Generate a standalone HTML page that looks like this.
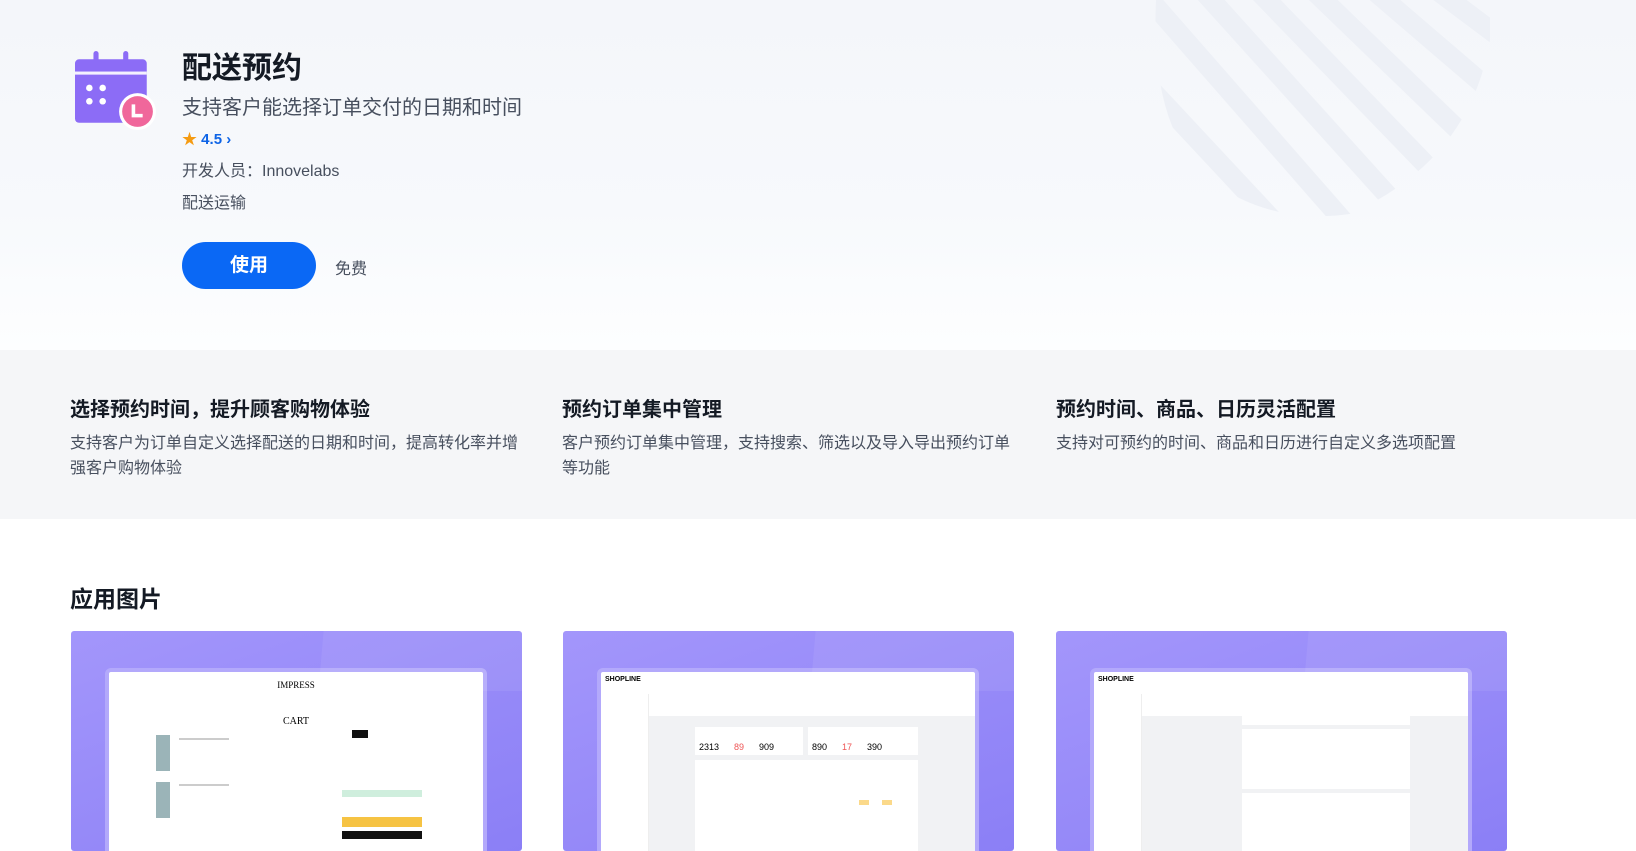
<!DOCTYPE html>
<html><head><meta charset="utf-8"><style>
*{margin:0;padding:0;box-sizing:border-box}
body{width:1636px;height:839px;overflow:hidden;background:#fff;font-family:"Liberation Sans","Noto Sans CJK SC",sans-serif;position:relative}
.hero{position:absolute;left:0;top:0;width:1636px;height:350px;background:linear-gradient(180deg,#f4f6fa 0%,#f7f9fc 60%,#fdfeff 100%)}
.abs{position:absolute}
.t1{left:182px;top:43px;font-size:30px;font-weight:bold;color:#141a24}
.t2{left:182px;top:91px;font-size:20px;color:#474f5e}
.rt{left:182px;top:128px;font-size:15px;color:#0e64e6;font-weight:bold}
.dv{left:182px;top:157px;font-size:16px;color:#474f5e}
.ct{left:182px;top:189px;font-size:16px;color:#474f5e}
.btn{left:182px;top:242px;width:134px;height:47px;border-radius:24px;background:#0a68f5;color:#fff;font-size:19px;font-weight:bold;text-align:center;line-height:47px}
.free{left:335px;top:255px;font-size:16px;color:#474f5e}
.band{left:0;top:350px;width:1636px;height:169px;background:#f5f6f8}
.ft{font-size:20px;font-weight:bold;color:#141a24;top:393px}
.fd{font-size:16px;color:#474f5e;top:431px;line-height:25px;width:460px}
.h2{left:70px;top:580px;font-size:23px;font-weight:bold;color:#141a24}
.card{top:631px;width:451px;height:220px;background:linear-gradient(160deg,#a396fb,#8b7ff6);border-radius:3px;overflow:hidden}
.card:after{content:"";position:absolute;left:250px;top:0;width:260px;height:60px;background:rgba(255,255,255,.07);transform:skewX(-5deg)}
.scr{position:absolute;left:34px;top:37px;width:382px;height:200px;background:#fff;border:4px solid #b3a9fb;border-radius:6px}
.side{position:absolute;left:0;top:22px;width:48px;height:180px;background:#fff;border-right:1px solid #eee}
.main{position:absolute;left:48px;top:22px;right:0;bottom:0;background:#f1f2f4}
.bx{position:absolute;background:#fff}
.ln{position:absolute;height:2px;background:#ccc}
</style></head><body>
<div class="hero"></div>
<svg class="abs" style="left:1150px;top:0" width="340" height="216" viewBox="0 0 340 216">
<defs><clipPath id="c"><path d="M6 0H340V40Q320 160 200 214Q120 225 60 180Q0 130 6 0Z"/></clipPath></defs>
<g clip-path="url(#c)" stroke="#edf0f6" stroke-width="20">
<line x1="-120" y1="-40" x2="160" y2="260"/><line x1="-70" y1="-80" x2="210" y2="240"/><line x1="-20" y1="-90" x2="260" y2="220"/><line x1="30" y1="-90" x2="310" y2="200"/><line x1="80" y1="-90" x2="360" y2="180"/><line x1="130" y1="-90" x2="410" y2="150"/><line x1="180" y1="-90" x2="460" y2="120"/><line x1="230" y1="-90" x2="510" y2="90"/>
</g></svg>
<svg class="abs" style="left:75px;top:49px" width="82" height="82" viewBox="0 0 80 80">
<rect x="0" y="10" width="70" height="62" rx="4" fill="#8c6cf6"/>
<rect x="0" y="22" width="70" height="3" fill="#fff" opacity=".9"/>
<rect x="18" y="2" width="5" height="14" rx="2.5" fill="#8c6cf6"/><rect x="47" y="2" width="5" height="14" rx="2.5" fill="#8c6cf6"/>
<circle cx="14" cy="38" r="3.2" fill="#fff"/><circle cx="27" cy="38" r="3.2" fill="#fff"/><circle cx="14" cy="51" r="3.2" fill="#fff"/><circle cx="27" cy="51" r="3.2" fill="#fff"/>
<circle cx="61" cy="61" r="18" fill="#fff"/><circle cx="61" cy="61" r="15" fill="#f0679b"/>
<path d="M57 54V65H66" stroke="#fff" stroke-width="3.5" fill="none"/>
</svg>
<div class="abs t1">配送预约</div>
<div class="abs t2">支持客户能选择订单交付的日期和时间</div>
<div class="abs rt"><span style="color:#f59b11">★</span> 4.5 ›</div>
<div class="abs dv">开发人员：Innovelabs</div>
<div class="abs ct">配送运输</div>
<div class="abs btn">使用</div>
<div class="abs free">免费</div>
<div class="abs band"></div>
<div class="abs ft" style="left:70px">选择预约时间，提升顾客购物体验</div>
<div class="abs fd" style="left:70px">支持客户为订单自定义选择配送的日期和时间，提高转化率并增强客户购物体验</div>
<div class="abs ft" style="left:562px">预约订单集中管理</div>
<div class="abs fd" style="left:562px">客户预约订单集中管理，支持搜索、筛选以及导入导出预约订单等功能</div>
<div class="abs ft" style="left:1056px">预约时间、商品、日历灵活配置</div>
<div class="abs fd" style="left:1056px">支持对可预约的时间、商品和日历进行自定义多选项配置</div>
<div class="abs h2">应用图片</div>
<div class="abs card" style="left:71px"><div class="scr">
<div style="position:absolute;left:0;right:0;top:8px;text-align:center;font-size:9px;font-family:'Liberation Serif',serif">IMPRESS</div>
<div style="position:absolute;left:0;right:0;top:44px;text-align:center;font-size:10px;font-family:'Liberation Serif',serif">CART</div>
<div class="bx" style="left:47px;top:63px;width:14px;height:36px;background:#9bb4b8"></div>
<div class="bx" style="left:47px;top:110px;width:14px;height:36px;background:#9bb4b8"></div>
<div class="ln" style="left:70px;top:66px;width:50px"></div><div class="ln" style="left:70px;top:112px;width:50px"></div>
<div class="bx" style="left:243px;top:58px;width:16px;height:8px;background:#111"></div>
<div class="bx" style="left:233px;top:118px;width:80px;height:7px;background:#cfeedd"></div>
<div class="bx" style="left:233px;top:145px;width:80px;height:10px;background:#f6c343"></div>
<div class="bx" style="left:233px;top:159px;width:80px;height:8px;background:#111"></div>
</div></div>
<div class="abs card" style="left:563px"><div class="scr">
<div style="position:absolute;left:4px;top:4px;font-size:7px;font-weight:bold">SHOPLINE</div>
<div class="side"></div><div class="main">
<div class="bx" style="left:0;right:0;top:0;height:22px"></div>
<div class="bx" style="left:46px;top:33px;width:108px;height:28px"></div>
<div class="bx" style="left:159px;top:33px;width:110px;height:28px"></div>
<div style="position:absolute;left:50px;top:48px;font-size:9px">2313 &nbsp;&nbsp;&nbsp;&nbsp;&nbsp;<span style="color:#e55">89</span> &nbsp;&nbsp;&nbsp;&nbsp;&nbsp;909</div>
<div style="position:absolute;left:163px;top:48px;font-size:9px">890 &nbsp;&nbsp;&nbsp;&nbsp;&nbsp;<span style="color:#e55">17</span> &nbsp;&nbsp;&nbsp;&nbsp;&nbsp;390</div>
<div class="bx" style="left:46px;top:66px;width:223px;height:120px"></div>
<div class="bx" style="left:210px;top:106px;width:10px;height:5px;background:#fbd98a"></div>
<div class="bx" style="left:233px;top:106px;width:10px;height:5px;background:#fbd98a"></div>
</div></div></div>
<div class="abs card" style="left:1056px"><div class="scr">
<div style="position:absolute;left:4px;top:4px;font-size:7px;font-weight:bold">SHOPLINE</div>
<div class="side"></div><div class="main">
<div class="bx" style="left:0;right:0;top:0;height:22px"></div>
<div class="bx" style="left:100px;top:14px;width:168px;height:17px"></div>
<div class="bx" style="left:100px;top:35px;width:168px;height:60px"></div>
<div class="bx" style="left:100px;top:99px;width:168px;height:80px"></div>
</div></div></div>
</body></html>
